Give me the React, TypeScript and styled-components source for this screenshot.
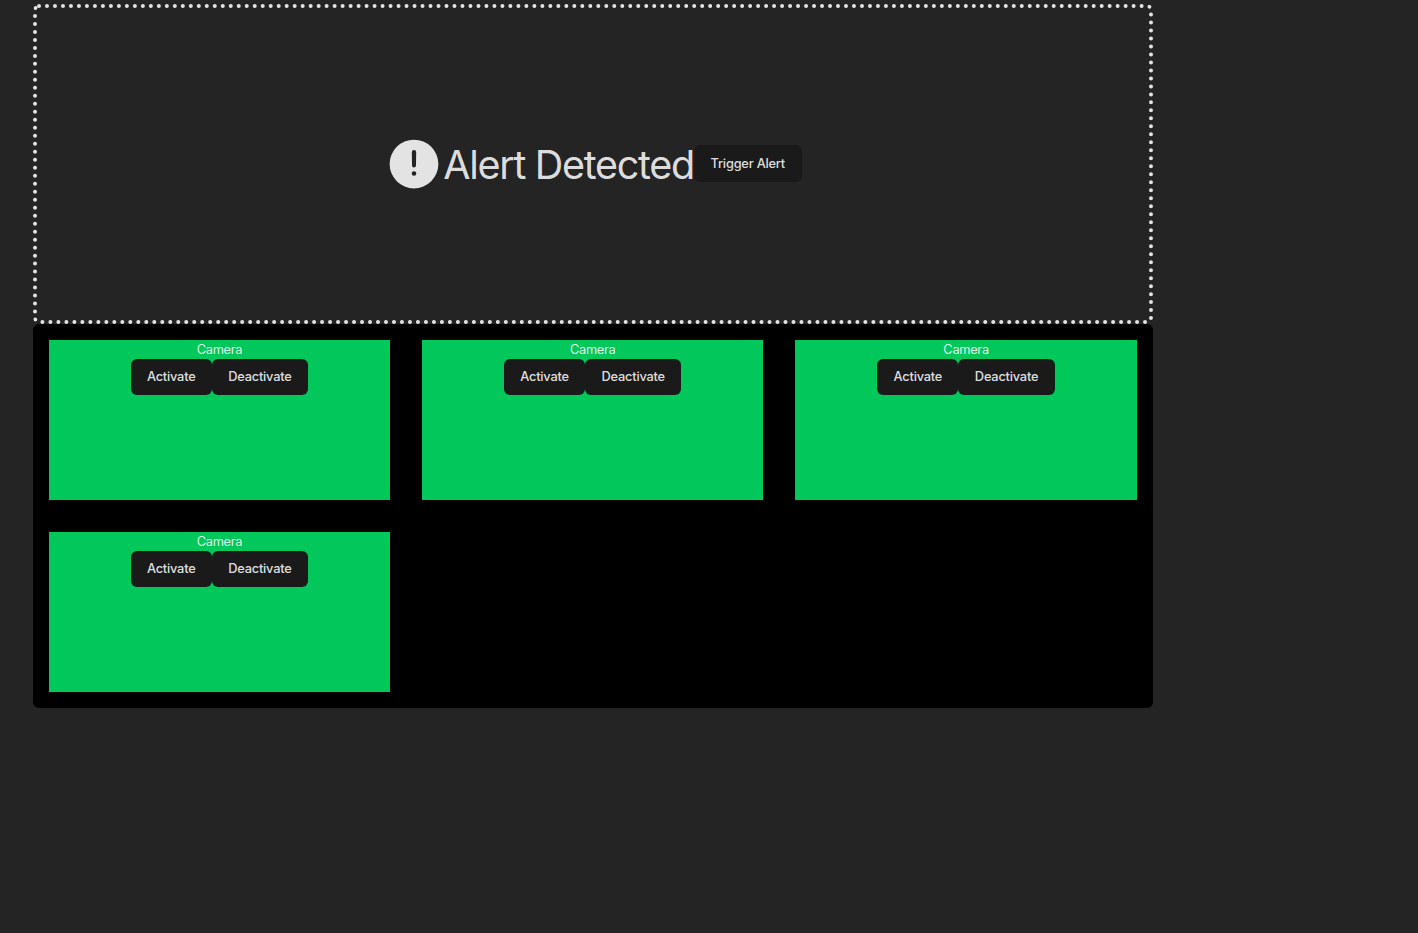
import React from "react";
import styled, { createGlobalStyle } from "styled-components";

const GlobalStyle = createGlobalStyle`
  *, *::before, *::after { box-sizing: border-box; }
  body {
    margin: 0;
    min-height: 100vh;
    background: #242424;
    color: rgba(255, 255, 255, 0.87);
    font-family: Inter, sans-serif;
    font-size: 12.8px;
    line-height: 19px;
  }
`;

const Page = styled.main`
  width: 1120px;
  margin: 4px 0 0 32.75px;
`;

const AlertPanel = styled.section`
  display: flex;
  align-items: center;
  justify-content: center;
  height: 320px;
  border: 4px dotted #e3e3e3;
  border-radius: 6px;
`;

const AlertIcon = styled.svg`
  width: 60px;
  height: 60px;
  flex: none;
`;

const AlertTitle = styled.span`
  width: 250px;
  padding-top: 2px;
  font-size: 39.5px;
  line-height: 48px;
  letter-spacing: -1.3px;
  text-indent: -0.5px;
  white-space: nowrap;
`;

const Button = styled.button<{ $width: number }>`
  width: ${(p) => p.$width}px;
  height: 36px;
  padding: 0 0 2px;
  border: 0;
  border-radius: 6px;
  background: #1a1a1a;
  color: rgba(255, 255, 255, 0.87);
  font: 500 12.8px/19px Inter, sans-serif;
  letter-spacing: -0.2px;
  white-space: nowrap;
`;

const TriggerButton = styled(Button)`
  height: 37px;
  padding-bottom: 1px;
  margin-bottom: 1px;
`;

const CameraGrid = styled.section`
  display: grid;
  grid-template-columns: repeat(3, 1fr);
  grid-auto-rows: 160px;
  gap: 32px;
  padding: 16px;
  border-radius: 6px;
  background: #000;
`;

const CameraCard = styled.article`
  background: #02c75b;
  text-align: center;
`;

const CameraLabel = styled.div`
  height: 19px;
  line-height: 20px;
  letter-spacing: -0.3px;
`;

const ButtonRow = styled.div`
  display: flex;
  justify-content: center;
`;

const Camera = () => (
  <CameraCard>
    <CameraLabel>Camera</CameraLabel>
    <ButtonRow>
      <Button $width={81}>Activate</Button>
      <Button $width={96.4}>Deactivate</Button>
    </ButtonRow>
  </CameraCard>
);

export default function App() {
  return (
    <>
      <GlobalStyle />
      <Page>
        <AlertPanel>
          <AlertIcon viewBox="0 0 24 24" fill="#e3e3e3">
            <path
              fillRule="evenodd"
              d="M12 2.25a9.75 9.75 0 1 0 0 19.5 9.75 9.75 0 0 0 0-19.5ZM12 6.4a.86.86 0 0 0-.87.88l.08 5.3c.01.48.34.8.79.8s.78-.32.79-.8l.08-5.3A.86.86 0 0 0 12 6.4Zm0 8.45a.93.93 0 1 0 0 1.86.93.93 0 0 0 0-1.86Z"
            />
          </AlertIcon>
          <AlertTitle>Alert Detected</AlertTitle>
          <TriggerButton $width={108}>Trigger Alert</TriggerButton>
        </AlertPanel>
        <CameraGrid>
          {[1, 2, 3, 4].map((id) => (
            <Camera key={id} />
          ))}
        </CameraGrid>
      </Page>
    </>
  );
}
